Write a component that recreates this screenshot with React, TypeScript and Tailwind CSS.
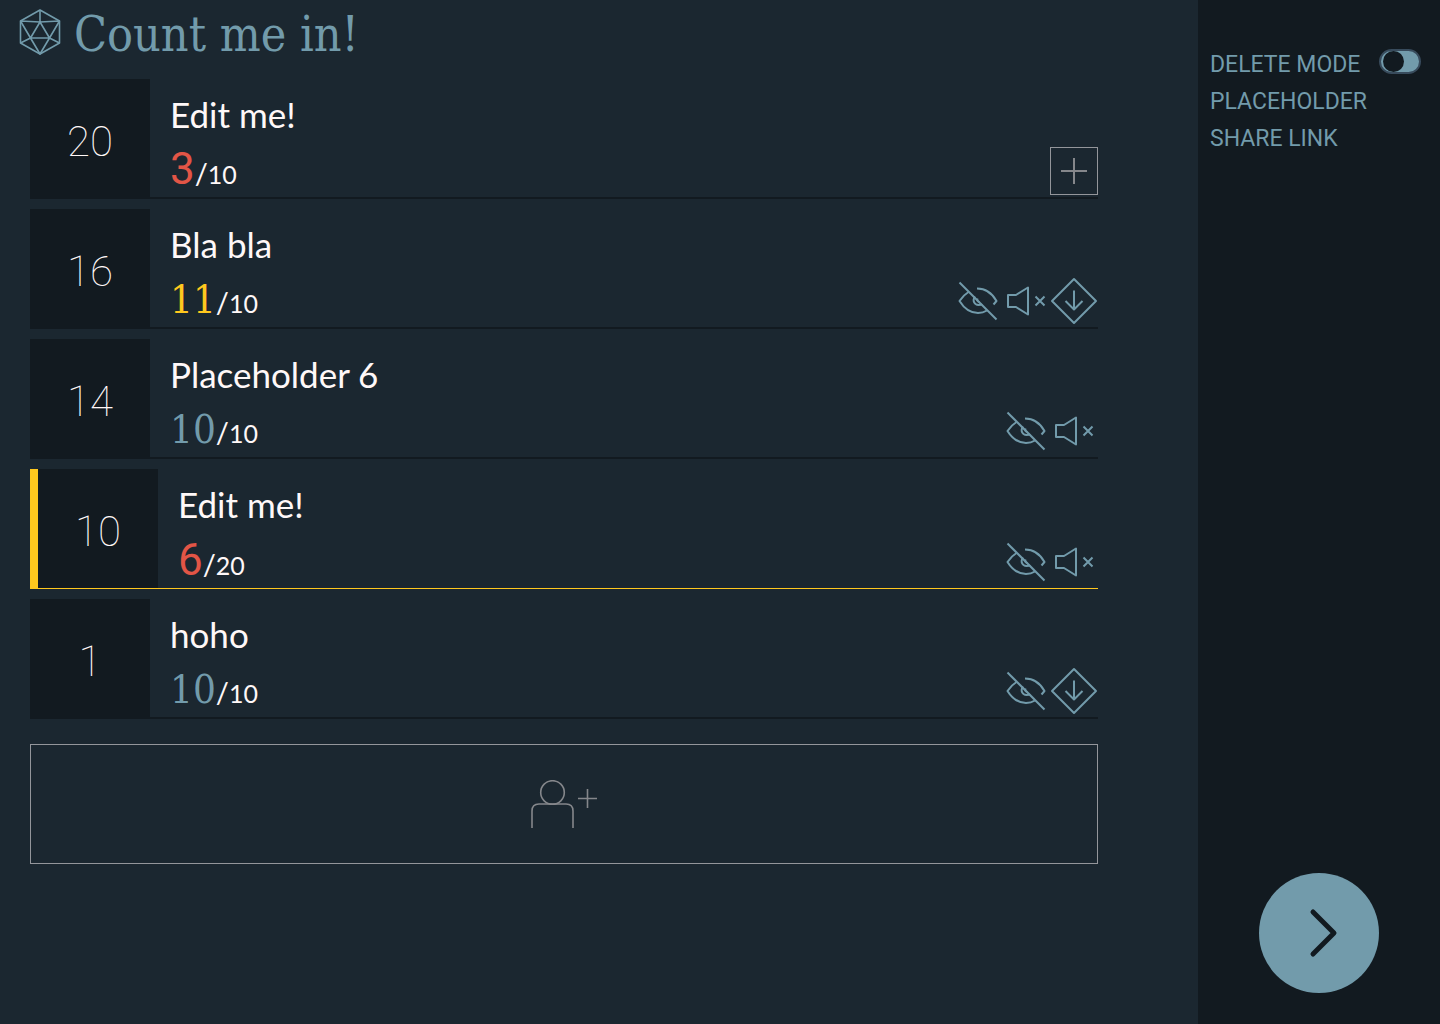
import React, { useState } from "react";

type Condition = "hidden" | "muted" | "prone";
type Creature = {
  initiative: number;
  name: string;
  hp: number;
  max: number;
  tone: "low" | "even" | "over";
  conditions: Condition[];
};

const creatures: Creature[] = [
  { initiative: 20, name: "Edit me!", hp: 3, max: 10, tone: "low", conditions: [] },
  { initiative: 16, name: "Bla bla", hp: 11, max: 10, tone: "over", conditions: ["hidden", "muted", "prone"] },
  { initiative: 14, name: "Placeholder 6", hp: 10, max: 10, tone: "even", conditions: ["hidden", "muted"] },
  { initiative: 10, name: "Edit me!", hp: 6, max: 20, tone: "low", conditions: ["hidden", "muted"] },
  { initiative: 1, name: "hoho", hp: 10, max: 10, tone: "even", conditions: ["hidden", "prone"] },
];

const toneClass = {
  low: "text-[#e25546] font-[Roboto] text-[44px]",
  even: "text-[#729bab] font-['DejaVu_Serif_Condensed','DejaVu_Serif',serif] text-[40px]",
  over: "text-[#ffc81e] font-['DejaVu_Serif_Condensed','DejaVu_Serif',serif] text-[40px]",
};

const iconPaths: Record<Condition, React.ReactNode> = {
  hidden: (
    <>
      <path d="M5.5 5.5 42.5 42.5" />
      <path d="M14.5 15Q9.5 18 5.5 24Q13 36 24 36Q29 36 33 33.500" />
      <path d="M23 11.500Q35.500 11.500 42.500 24L39.500 27.500" />
      <path d="M21 19.500C18 24 20.500 28 24.500 28Q27 28 28 27" />
      <path d="M23.500 21.500Q22.500 24.500 25.500 25" />
    </>
  ),
  muted: (
    <>
      <path d="M6 18H14L26 10.500V37.500L14 30H6Z" />
      <path d="M33.500 19.500 42.500 28.500M42.500 19.500 33.500 28.500" />
    </>
  ),
  prone: (
    <>
      <path d="M24 2 46 24 24 46 2 24Z" />
      <path d="M24 13.500V32.500M15.500 24 24 32.500 32.500 24" />
    </>
  ),
};

function ConditionIcon({ kind }: { kind: Condition }) {
  return (
    <svg className="size-12 text-[#729bab]" viewBox="0 0 48 48" fill="none" stroke="currentColor" strokeWidth="2" strokeLinejoin="round" aria-label={kind} role="img">
      {iconPaths[kind]}
    </svg>
  );
}

function Logo() {
  return (
    <svg className="h-12 w-11 shrink-0" viewBox="0 0 44 48" fill="none" stroke="currentColor" strokeWidth="1.6" strokeLinejoin="round" aria-hidden="true">
      <path d="M22 2 41.500 13V35L22 46 2.500 35V13Z" />
      <path d="M22 2V14M2.500 13 22 14 41.500 13M22 14 12.500 30H31.500ZM2.500 13 12.500 30 2.500 35M41.500 13 31.500 30 41.500 35M12.500 30 22 46 31.500 30" />
    </svg>
  );
}

function CreatureRow({ creature, active }: { creature: Creature; active: boolean }) {
  return (
    <li className={active ? "flex h-[120px] border-b border-l-8 border-[#ffc81e]" : "flex h-[120px] border-b-2 border-[#121a20]"}>
      <button type="button" className="w-[120px] shrink-0 bg-[#121a20] pt-1.5 text-center font-[Roboto] text-[42px] font-thin">
        {creature.initiative}
      </button>
      <div className="flex min-w-0 flex-1 flex-col justify-between pl-5">
        <div className="pt-[11px] text-[35px] leading-12">{creature.name}</div>
        <div className="flex items-end justify-between pb-0.5">
          <div className="flex h-12 items-baseline leading-[44px]">
            <span className={toneClass[creature.tone]}>{creature.hp}</span>
            <span className="text-[29px]">/</span>
            <span className="text-[25px]">{creature.max}</span>
          </div>
          <div className="flex">
            {creature.conditions.map((c) => (
              <ConditionIcon key={c} kind={c} />
            ))}
            {creature.conditions.length === 0 && (
              <button type="button" aria-label="Add condition" className="size-12 border border-[#94969b] text-[#85878b]">
                <svg viewBox="0 0 46 46" fill="none" stroke="currentColor" strokeWidth="2">
                  <path d="M23 10V36M10 23H36" />
                </svg>
              </button>
            )}
          </div>
        </div>
      </div>
    </li>
  );
}

export default function App() {
  const [turn, setTurn] = useState(3);
  const [deleteMode, setDeleteMode] = useState(false);

  return (
    <div className="flex min-h-screen bg-[#1b2730] font-[Lato,sans-serif] text-[#fff8f8]">
      <main className="min-w-0 flex-1 pr-[100px] pl-[30px]">
        <header className="-ml-3 flex h-[79px] items-start gap-3 pt-2 text-[#729bab]">
          <Logo />
          <h1 className="text-5xl leading-13 whitespace-nowrap font-['DejaVu_Serif_Condensed','DejaVu_Serif',serif]">Count me in!</h1>
        </header>
        <ol className="flex flex-col gap-2.5">
          {creatures.map((creature, i) => (
            <CreatureRow key={i} creature={creature} active={i === turn} />
          ))}
        </ol>
        <button type="button" aria-label="Add creature" className="mt-[25px] flex h-[120px] w-full items-center justify-center border border-[#94969b] text-[#85878b]">
          <svg className="h-12 w-17" viewBox="0 0 68 48" fill="none" stroke="currentColor" strokeWidth="1.6">
            <circle cx="22.500" cy="12.500" r="11.800" />
            <path d="M2 48V31Q2 24 9 24H36Q43 24 43 31V48M57.500 9V28M48 18.500H67" />
          </svg>
        </button>
      </main>
      <aside className="flex w-[242px] shrink-0 flex-col justify-between bg-[#121a20] px-3 pt-[46px] pb-[31px] text-[#729bab]">
        <nav className="flex flex-col font-[Roboto] text-[23px] leading-[37px]">
          <label className="relative flex items-center justify-between pr-[7px]">
            DELETE MODE
            <input type="checkbox" role="switch" checked={deleteMode} onChange={() => setDeleteMode(!deleteMode)} className="peer sr-only" />
            <span className="mb-1.5 flex h-[25px] w-[42px] items-center rounded-full border-2 border-[#384b5c] bg-[#729bab] px-0.5 peer-checked:justify-end">
              <span className="size-[21px] rounded-full bg-[#121a20]" />
            </span>
          </label>
          <button type="button" className="text-left">PLACEHOLDER</button>
          <a href="#share">SHARE LINK</a>
        </nav>
        <button type="button" aria-label="Next turn" onClick={() => setTurn((turn + 1) % creatures.length)} className="flex size-[120px] items-center justify-center self-center rounded-full bg-[#729bab] text-[#121a20]">
          <svg className="size-[120px]" viewBox="0 0 120 120" fill="none" stroke="currentColor" strokeWidth="5" strokeLinecap="round" strokeLinejoin="round">
            <path d="M54 39 75 60 54 81" />
          </svg>
        </button>
      </aside>
    </div>
  );
}
